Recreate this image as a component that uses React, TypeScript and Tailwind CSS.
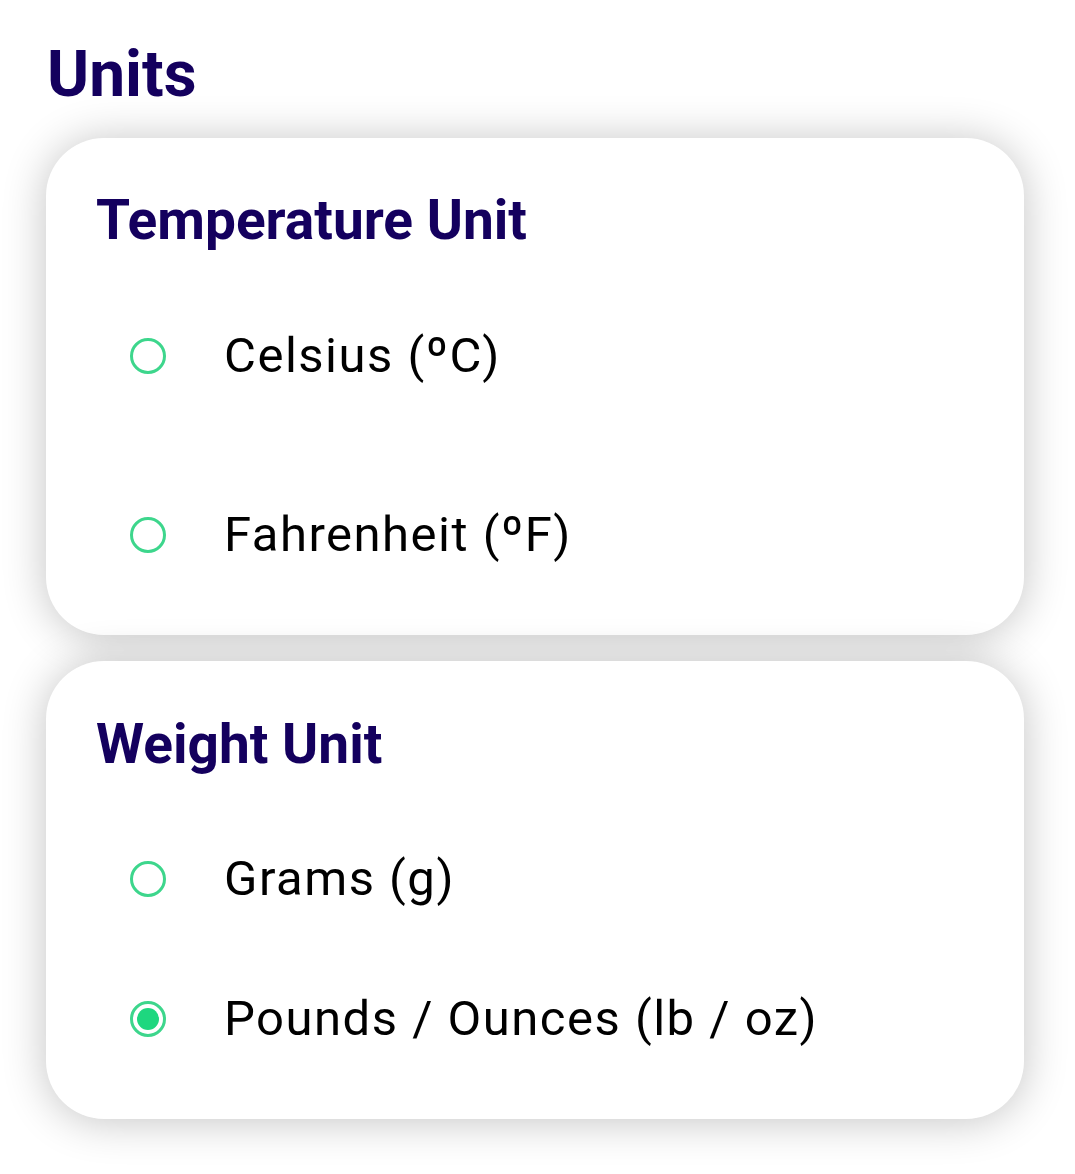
const options = {
  temperature: ["Celsius (ºC)", "Fahrenheit (ºF)"],
  weight: ["Grams (g)", "Pounds / Ounces (lb / oz)"],
};

function Radio({ checked }: { checked: boolean }) {
  return (
    <span className="flex h-[36px] w-[36px] shrink-0 items-center justify-center rounded-full border-[3.5px] border-[#3dd68c]">
      {checked && <span className="h-[22px] w-[22px] rounded-full bg-[#1ed77f]" />}
    </span>
  );
}

function Option({ label, checked, className }: { label: string; checked: boolean; className: string }) {
  return (
    <div className={`flex h-[80px] items-center ${className}`}>
      <div className="ml-[34px]">
        <Radio checked={checked} />
      </div>
      <span className="ml-[58px] text-[49px] leading-[56px] tracking-[1.5px] text-black">{label}</span>
    </div>
  );
}

export default function App() {
  return (
    <div className="min-h-screen bg-white font-['Roboto',sans-serif]">
      <div className="pl-[46px] pr-[51px] pt-[37px]">
        <h1 className="ml-[1px] text-[64px] font-bold leading-[75px] text-[#14005e]">Units</h1>

        <div className="mt-[26px] rounded-[58px] bg-white pl-[50px] pt-[50px] pb-[60px] shadow-[0_2px_44px_rgba(0,0,0,0.24)]">
          <h2 className="text-[55px] font-bold leading-[64px] text-[#14005e]">Temperature Unit</h2>
          <Option label={options.temperature[0]} checked={false} className="mt-[64px]" />
          <Option label={options.temperature[1]} checked={false} className="mt-[99px]" />
        </div>

        <div className="mt-[26px] rounded-[58px] bg-white pl-[50px] pt-[51px] pb-[60px] shadow-[0_2px_44px_rgba(0,0,0,0.24)]">
          <h2 className="text-[55px] font-bold leading-[64px] text-[#14005e]">Weight Unit</h2>
          <Option label={options.weight[0]} checked={false} className="mt-[63px]" />
          <Option label={options.weight[1]} checked={true} className="mt-[60px]" />
        </div>
      </div>
    </div>
  );
}
